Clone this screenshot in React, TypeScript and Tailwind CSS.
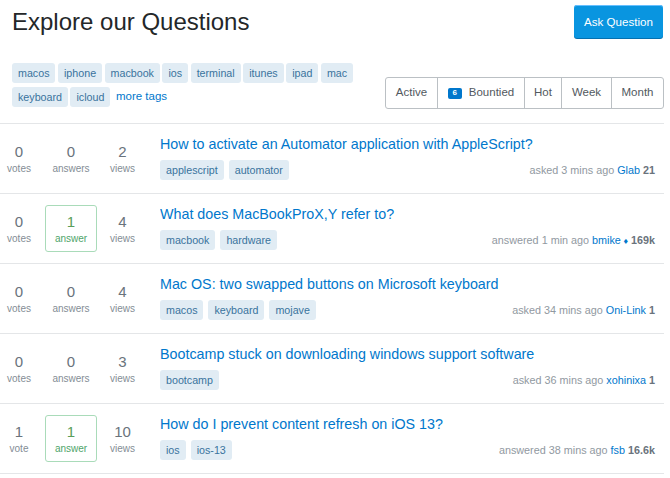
const topTags = ["macos", "iphone", "macbook", "ios", "terminal", "itunes", "ipad", "mac", "keyboard", "icloud"];

const tabs = [
  { label: "Active", w: "w-[51px]" },
  { label: "Bountied", w: "w-[87px]" },
  { label: "Hot", w: "w-[37px]" },
  { label: "Week", w: "w-[50px]" },
  { label: "Month", w: "w-[52px]" },
];

interface Question {
  votes: number;
  answers: number;
  views: number;
  title: string;
  tags: string[];
  action: string;
  time: string;
  user: string;
  mod?: boolean;
  rep: string;
}

const questions: Question[] = [
  {
    votes: 0, answers: 0, views: 2,
    title: "How to activate an Automator application with AppleScript?",
    tags: ["applescript", "automator"],
    action: "asked", time: "3 mins ago", user: "Glab", rep: "21",
  },
  {
    votes: 0, answers: 1, views: 4,
    title: "What does MacBookProX,Y refer to?",
    tags: ["macbook", "hardware"],
    action: "answered", time: "1 min ago", user: "bmike", mod: true, rep: "169k",
  },
  {
    votes: 0, answers: 0, views: 4,
    title: "Mac OS: two swapped buttons on Microsoft keyboard",
    tags: ["macos", "keyboard", "mojave"],
    action: "asked", time: "34 mins ago", user: "Oni-Link", rep: "1",
  },
  {
    votes: 0, answers: 0, views: 3,
    title: "Bootcamp stuck on downloading windows support software",
    tags: ["bootcamp"],
    action: "asked", time: "36 mins ago", user: "xohinixa", rep: "1",
  },
  {
    votes: 1, answers: 1, views: 10,
    title: "How do I prevent content refresh on iOS 13?",
    tags: ["ios", "ios-13"],
    action: "answered", time: "38 mins ago", user: "fsb", rep: "16.6k",
  },
];

function Tag({ name }: { name: string }) {
  return (
    <span className="h-[20px] px-[6px] flex items-center rounded-[3px] bg-[#e1ecf4] text-[#39739d] text-[10.7px] leading-none">
      {name}
    </span>
  );
}

function Stat({ n, label, boxed }: { n: number; label: string; boxed?: boolean }) {
  return (
    <div
      className={
        "flex flex-col items-center border rounded-[3px] pt-[6px] pb-[5px] " +
        (boxed ? "border-[#a9dbb9]" : "border-transparent")
      }
    >
      <span className={"text-[15px] leading-[20px] " + (boxed ? "text-[#5a9e5a]" : "text-[#6a737c]")}>{n}</span>
      <span className={"text-[10px] leading-[14px] " + (boxed ? "text-[#4fa46a]" : "text-[#848d95]")}>{label}</span>
    </div>
  );
}

function Row({ q }: { q: Question }) {
  return (
    <div className="flex border-b border-[#e4e6e8] pt-[11px] pb-[11px]">
      <div className="flex shrink-0">
        <div className="w-[38px]">
          <Stat n={q.votes} label={q.votes === 1 ? "vote" : "votes"} />
        </div>
        <div className="w-[52px] ml-[7px]">
          <Stat n={q.answers} label={q.answers === 1 ? "answer" : "answers"} boxed={q.answers > 0} />
        </div>
        <div className="w-[51px]">
          <Stat n={q.views} label="views" />
        </div>
      </div>
      <div className="flex-1 ml-[12px] pr-[9px] min-w-0">
        <a className="block text-[14.3px] leading-[18px] text-[#0077cc] truncate">{q.title}</a>
        <div className="flex items-center mt-[7px]">
          <div className="flex gap-[5px]">
            {q.tags.map((t) => (
              <Tag key={t} name={t} />
            ))}
          </div>
          <div className="ml-auto text-[10.8px] whitespace-nowrap">
            <span className="text-[#9199a1]">
              {q.action} {q.time}{" "}
            </span>
            <span className="text-[#0077cc]">{q.user}</span>
            {q.mod && <span className="text-[#0077cc] text-[9px]"> ♦</span>}
            <span className="text-[#6a737c] font-bold"> {q.rep}</span>
          </div>
        </div>
      </div>
    </div>
  );
}

export default function App() {
  return (
    <div className="w-[664px] bg-white font-['Liberation_Sans',Arial,sans-serif]">
      <div className="flex justify-between items-start pt-[5px] pl-[12px] pr-[1px]">
        <h1 className="mt-[2px] text-[24px] leading-[30px] text-[#242729]">Explore our Questions</h1>
        <button className="h-[33px] w-[89px] rounded-[3px] bg-[#0995e0] text-white text-[11.6px] shadow-[inset_0_1px_0_#66bfff,0_1px_0_#0470b0]">
          Ask Question
        </button>
      </div>

      <div className="flex justify-between items-start mt-[25px] pl-[12px]">
        <div className="w-[360px] flex flex-wrap gap-x-[2.5px] gap-y-[4px] items-center">
          {topTags.map((t) => (
            <Tag key={t} name={t} />
          ))}
          <a className="ml-[3px] text-[11.5px] text-[#0077cc]">more tags</a>
        </div>
        <div className="mt-[14px] flex h-[32px] border border-[#bbc0c4] rounded-[3px]">
          {tabs.map((t, i) => (
            <div
              key={t.label}
              className={
                "flex items-center justify-center text-[11.5px] text-[#525960] " +
                t.w +
                (i > 0 ? " border-l border-[#bbc0c4]" : "")
              }
            >
              {t.label === "Bountied" && (
                <span className="mr-[7px] w-[14px] h-[11px] rounded-[2px] bg-[#0077cc] text-white text-[8px] font-bold flex items-center justify-center">
                  6
                </span>
              )}
              {t.label}
            </div>
          ))}
        </div>
      </div>

      <div className="mt-[14px] border-t border-[#e4e6e8]">
        {questions.map((q, i) => (
          <Row key={i} q={q} />
        ))}
      </div>
    </div>
  );
}
